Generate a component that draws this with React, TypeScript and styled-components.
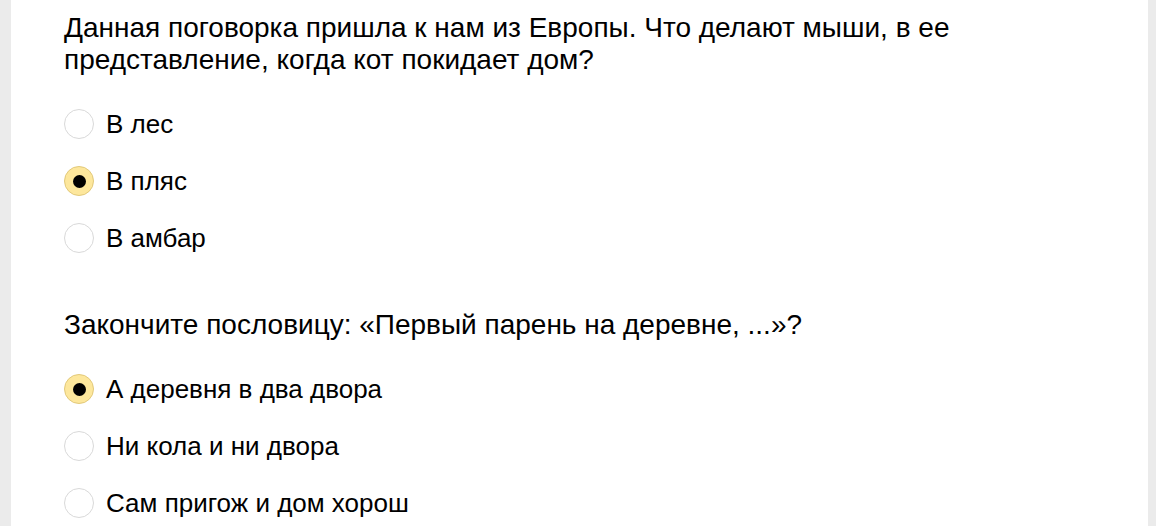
import styled, { createGlobalStyle } from "styled-components"

const GlobalStyle = createGlobalStyle`
  html, body {
    margin: 0;
    padding: 0;
    background: #ebebeb;
  }
  body {
    font-family: "Liberation Sans", Arial, sans-serif;
    color: #000;
  }
`

const Page = styled.div`
  display: flex;
  justify-content: center;
  padding: 0 8px 0 11px;
  min-height: 526px;
  box-sizing: border-box;
`

const Card = styled.div`
  flex: 1;
  background: #fff;
  padding: 12px 53px 4px 53px;
`

const Group = styled.div`
  & + & {
    margin-top: 55px;
  }
`

const Question = styled.div`
  font-size: 28px;
  line-height: 32px;
  margin-bottom: 32px;
`

const Options = styled.div`
  display: flex;
  flex-direction: column;
  gap: 25px;
`

const Option = styled.label`
  display: flex;
  align-items: center;
  gap: 12px;
  font-size: 26px;
  line-height: 32px;
  cursor: pointer;
`

const Radio = styled.span<{ $checked?: boolean }>`
  width: 30px;
  height: 30px;
  box-sizing: border-box;
  border-radius: 50%;
  border: 1px solid ${(p) => (p.$checked ? "#e2c97a" : "#d9d9d9")};
  background: ${(p) => (p.$checked ? "#fde79c" : "#fff")};
  display: flex;
  align-items: center;
  justify-content: center;
  flex-shrink: 0;

  &::after {
    content: "";
    display: ${(p) => (p.$checked ? "block" : "none")};
    width: 13px;
    height: 13px;
    border-radius: 50%;
    background: #000;
  }
`

const questions = [
  {
    text: "Данная поговорка пришла к нам из Европы. Что делают мыши, в ее представление, когда кот покидает дом?",
    options: ["В лес", "В пляс", "В амбар"],
    checked: 1,
  },
  {
    text: "Закончите пословицу: «Первый парень на деревне, ...»?",
    options: ["А деревня в два двора", "Ни кола и ни двора", "Сам пригож и дом хорош"],
    checked: 0,
  },
]

export default function App() {
  return (
    <>
      <GlobalStyle />
      <Page>
        <Card>
          {questions.map((q) => (
            <Group key={q.text}>
              <Question>{q.text}</Question>
              <Options>
                {q.options.map((o, i) => (
                  <Option key={o}>
                    <Radio $checked={i === q.checked} />
                    {o}
                  </Option>
                ))}
              </Options>
            </Group>
          ))}
        </Card>
      </Page>
    </>
  )
}
